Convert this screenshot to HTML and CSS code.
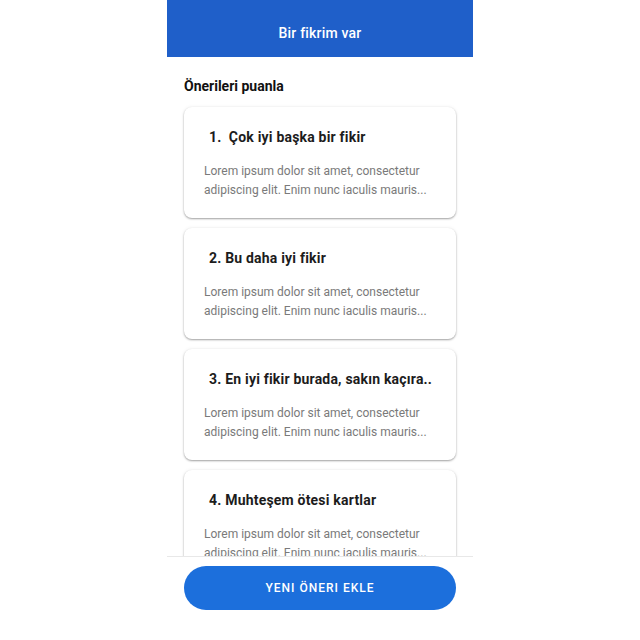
FILE: index.html
```html
<!DOCTYPE html>
<html lang="tr">
<head>
<meta charset="utf-8">
<link rel="stylesheet" href="styles.css">
</head>
<body>
<div class="app">
  <header class="topbar">Bir fikrim var</header>
  <main class="content">
    <h2 class="section-title">Önerileri puanla</h2>
    <div class="cards">
      <div class="card">
        <div class="card-title">1.&nbsp; Çok iyi başka bir fikir</div>
        <p class="card-text">Lorem ipsum dolor sit amet, consectetur adipiscing elit. Enim nunc iaculis mauris...</p>
      </div>
      <div class="card">
        <div class="card-title">2. Bu daha iyi fikir</div>
        <p class="card-text">Lorem ipsum dolor sit amet, consectetur adipiscing elit. Enim nunc iaculis mauris...</p>
      </div>
      <div class="card">
        <div class="card-title">3. En iyi fikir burada, sakın kaçıra..</div>
        <p class="card-text">Lorem ipsum dolor sit amet, consectetur adipiscing elit. Enim nunc iaculis mauris...</p>
      </div>
      <div class="card">
        <div class="card-title">4. Muhteşem ötesi kartlar</div>
        <p class="card-text">Lorem ipsum dolor sit amet, consectetur adipiscing elit. Enim nunc iaculis mauris...</p>
      </div>
    </div>
  </main>
  <footer class="bottombar">
    <button class="add-btn">YENI ÖNERI EKLE</button>
  </footer>
</div>
</body>
</html>
```
FILE: styles.css
```css
* { box-sizing: border-box; }
html, body { margin: 0; padding: 0; background: #fff; }
body { font-family: Roboto, "Noto Sans", sans-serif; }
.app {
  width: 306px;
  height: 640px;
  margin: 0 auto;
  display: flex;
  flex-direction: column;
  background: #fff;
}
.topbar {
  height: 57px;
  flex: none;
  background: #1f5fc9;
  color: #fff;
  font-size: 14px;
  font-weight: 500;
  display: flex;
  align-items: center;
  justify-content: center;
  padding-top: 8px;
  letter-spacing: 0.2px;
}
.content {
  flex: 1;
  overflow: hidden;
  padding: 0 17px;
}
.section-title {
  margin: 20px 0 0;
  font-size: 14px;
  font-weight: 700;
  line-height: 18px;
  color: #111;
}
.cards {
  margin-top: 12px;
  display: flex;
  flex-direction: column;
  gap: 10px;
}
.card {
  background: #fff;
  border-radius: 8px;
  padding: 21px 20px 18px;
  box-shadow: 0 1px 2px rgba(0,0,0,0.35), 0 0 4px rgba(0,0,0,0.06);
}
.card-title {
  margin-left: 5px;
  font-size: 14px;
  font-weight: 700;
  line-height: 18px;
  color: #1c1c1c;
  letter-spacing: 0.2px;
  white-space: pre;
}
.card-text {
  margin: 16px 0 0;
  font-size: 12px;
  line-height: 19px;
  color: #7a7a7a;
}
.bottombar {
  flex: none;
  height: 84px;
  border-top: 1px solid #e8e8e8;
  padding: 9px 17px 0;
}
.add-btn {
  width: 100%;
  height: 44px;
  border: none;
  border-radius: 22px;
  background: #1c6fdc;
  color: #fff;
  font-family: Roboto, sans-serif;
  font-size: 12px;
  font-weight: 500;
  letter-spacing: 1px;
}
```
